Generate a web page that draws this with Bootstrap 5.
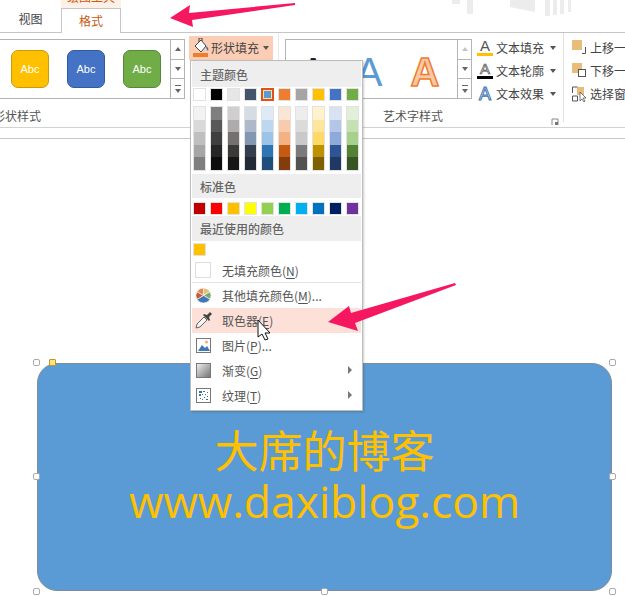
<!DOCTYPE html>
<html lang="zh-CN">
<head>
    <meta charset="UTF-8">
    <title>形状填充</title>
    <link rel="stylesheet" href="https://cdn.jsdelivr.net/npm/bootstrap@5.3.0/dist/css/bootstrap.min.css">
    <style>
        html, body { width: 625px; height: 596px; overflow: hidden; background: #fff; }
        body { position: relative; font-family: "Noto Sans CJK SC", sans-serif; font-size: 12px; line-height: 16px; color: #555; }
        u { text-underline-offset: 2px; }

        .tab-strip { height: 33px; border-bottom: 1px solid #c6c6c6; padding-left: 2px; }
        .tab-plain { width: 57px; margin-right: 2px; padding-top: 11px; text-align: center; color: #444; }
        .tab-col { width: 60px; }
        .tab-ctx { height: 8px; background: #fdf1e7; color: #d35a0d; overflow: hidden; line-height: 0; text-align: center; }
        .tab-ctx span { display: block; margin-top: -3px; }
        .tab-on { height: 25px; margin-bottom: -1px; background: #fff; border: 1px solid #c6c6c6; border-bottom: 0; color: #c65a11; text-align: center; line-height: 23px; }

        .ribbon { height: 95px; border-bottom: 1px solid #d2d2d2; overflow: hidden; }
        .ruler-strip { height: 11px; border-bottom: 1px solid #c6c6c6; }
        .rb-group { padding-top: 6px; }
        .rb-shape { width: 279px; border-right: 1px solid #e6e6e6; margin-bottom: 5px; }
        .rb-art { width: 284px; padding-left: 6px; }
        .rb-arrange { padding: 3px 0 0 8px; border-left: 1px solid #e0e0e0; margin-bottom: 5px; white-space: nowrap; }
        .rb-label { height: 26px; line-height: 34px; color: #555; white-space: nowrap; }
        .shape-label { margin-left: -7px; }
        .art-label { margin-left: 98px; }

        .gallery { height: 60px; border: 1px solid #b4b4b4; }
        .gal-shape { width: 186px; margin-left: -1px; border-left: 0; }
        .gal-art { width: 187px; }
        .gal-body { flex: 1; overflow: hidden; }
        .abc-row { gap: 18px; margin-left: 12px; }
        .spin { width: 14px; border-left: 1px solid #b4b4b4; }
        .spin div { flex: 1; border-bottom: 1px solid #b4b4b4; display: flex; align-items: center; justify-content: center; }
        .spin div:last-child { border-bottom: 0; }
        .tri-up { border: 3.5px solid transparent; border-top: 0; border-bottom: 4px solid #666; }
        .tri-dn { border: 3.5px solid transparent; border-bottom: 0; border-top: 4px solid #666; }
        .tri-off { border-bottom-color: #c4c4c4; }
        .tri-more { border-top: 1px solid #666; padding-top: 2px; line-height: 0; }

        .abc { width: 38px; height: 38px; border-radius: 7px; border: 1px solid; color: #fff; font: 11px/36px "Liberation Sans", sans-serif; text-align: center; }
        .abc-y { background: #ffc000; border-color: #c99a0c; }
        .abc-b { background: #4472c4; border-color: #325a9e; }
        .abc-g { background: #70ad47; border-color: #55883a; }

        .fill-btn { width: 84px; height: 24px; margin: -3px 0 0 4px; background: #fbcdb4; color: #444; padding-left: 4px; gap: 1px; }
        .caret-dn { border: 3px solid transparent; border-bottom: 0; border-top: 4px solid #555; }
        .fill-btn .caret-dn { margin-left: 3px; }
        .text-col { margin: -3px 0 -6px 5px; }
        .text-btn { height: 23px; color: #444; gap: 2px; white-space: nowrap; }
        .text-btn svg { flex: none; }
        .text-btn .caret-dn { margin-left: 4px; }
        .arrange-btn { height: 23px; color: #444; gap: 3px; }

        .stage { padding: 224px 0 0 37px; }
        .slide-shape { width: 575px; height: 228px; padding-bottom: 4px; background: #5b9bd5; border: 1px solid #7f8c99; border-radius: 20px; color: #ffc000; position: relative; }
        .slide-cn { font-size: 44px; line-height: 52px; }
        .slide-url { font-family: "Open Sans", sans-serif; font-size: 44.4px; line-height: 52px; }
        .grip { position: absolute; width: 7px; height: 7px; background: #fff; border: 1px solid #aaa; border-radius: 2px; }
        .grip-y { background: #ffe27a; border-color: #b69a2c; border-radius: 1px; }

        .fill-menu { position: absolute; left: 190px; top: 60px; width: 173px; height: 351px; background: #fff; border: 1px solid #bdbdbd; box-shadow: 1px 1px 2px rgba(0,0,0,.2); padding: 0 1px; }
        .menu-head { background: #eee; padding-left: 8px; color: #666; font-weight: 500; }
        .head-a { height: 26px; line-height: 27px; }
        .head-b { height: 24px; line-height: 25px; margin-top: 3px; }
        .head-c { height: 25px; line-height: 25px; margin-top: 1px; }
        .swatches { padding-left: 1px; gap: 4px; }
        .swatch { width: 13px; height: 13px; outline: 1px solid #e2e2e2; outline-offset: -1px; }
        .swatch-sel { border: 2px solid #e2511c; outline: 1px solid #fde39a; outline-offset: -3px; }
        .tint-col { width: 13px; height: 65px; padding: 1px; background: #e2e2e2; }
        .tint { height: 12.6px; }
        .menu-item { height: 25px; padding-left: 30px; position: relative; color: #555; }
        .menu-item svg.ic { position: absolute; left: 3px; top: 4px; }
        .menu-hot { background: #fde1d9; }
        .menu-sep { height: 1px; background: #e4e4e4; }
        .sub-arrow { position: absolute; right: 9px; top: 8px; border: 4px solid transparent; border-right: 0; border-left: 4px solid #777; }
        .no-fill { width: 16px; height: 16px; border: 1px solid #ddd; position: absolute; left: 3px; top: 3px; }

        .overlay { position: absolute; left: 0; top: 0; pointer-events: none; }
    </style>
</head>
<body>
    <div class="tab-strip d-flex">
        <div class="tab-plain">视图</div>
        <div class="tab-col">
            <div class="tab-ctx"><span>绘图工具</span></div>
            <div class="tab-on">格式</div>
        </div>
    </div>

    <div class="ribbon d-flex">
        <div class="rb-group rb-shape flex-shrink-0">
            <div class="d-flex">
                <div class="gallery gal-shape d-flex flex-shrink-0">
                    <div class="gal-body d-flex align-items-center">
                        <div class="abc-row d-flex">
                            <div class="abc abc-y">Abc</div>
                            <div class="abc abc-b">Abc</div>
                            <div class="abc abc-g">Abc</div>
                        </div>
                    </div>
                    <div class="spin d-flex flex-column">
                        <div><span class="tri-up"></span></div>
                        <div><span class="tri-dn"></span></div>
                        <div><span class="tri-more"><span class="tri-dn d-inline-block"></span></span></div>
                    </div>
                </div>
                <div class="fill-btn d-flex align-items-center flex-shrink-0">
                    <svg width="17" height="20" viewBox="0 0 17 20">
                        <path d="M2 8 8 2l5 6-5 6z" fill="#fff" stroke="#444"/>
                        <path d="M6 4V0h3v3" fill="none" stroke="#444"/>
                        <path d="M13 8c2 1 3 3 2 5-1-1-2-3-2-5z" fill="#3a6db0"/>
                        <rect x="0" y="15" width="15" height="4" fill="#ed7d31"/>
                    </svg>
                    <span>形状填充</span>
                    <span class="caret-dn"></span>
                </div>
            </div>
            <div class="rb-label shape-label">形状样式</div>
        </div>

        <div class="rb-group rb-art flex-shrink-0">
            <div class="d-flex">
                <div class="gallery gal-art d-flex flex-shrink-0">
                    <div class="gal-body">
                        <svg width="172" height="58" viewBox="0 0 172 58">
                            <text x="27" y="46" text-anchor="middle" font-size="40" font-family="Liberation Sans" fill="#222">A</text>
                            <text x="83" y="46" text-anchor="middle" font-size="40" font-family="Liberation Sans" fill="#5b9bd5">A</text>
                            <text x="139" y="46" text-anchor="middle" font-size="40" font-family="Liberation Sans" font-weight="bold" fill="#f9c9a5" stroke="#ed7d31" stroke-width="1.5">A</text>
                        </svg>
                    </div>
                    <div class="spin d-flex flex-column">
                        <div><span class="tri-up tri-off"></span></div>
                        <div><span class="tri-dn"></span></div>
                        <div><span class="tri-more"><span class="tri-dn d-inline-block"></span></span></div>
                    </div>
                </div>
                <div class="text-col d-flex flex-column">
                    <div class="text-btn d-flex align-items-center">
                        <svg width="17" height="20" viewBox="0 0 17 20"><text x="8" y="13" text-anchor="middle" font-size="15" font-family="Liberation Sans" fill="#555">A</text><rect y="15" width="16" height="3" fill="#ffc000"/></svg>
                        <span>文本填充</span><span class="caret-dn"></span>
                    </div>
                    <div class="text-btn d-flex align-items-center">
                        <svg width="17" height="20" viewBox="0 0 17 20"><text x="8" y="13" text-anchor="middle" font-size="15" font-family="Liberation Sans" fill="#fff" stroke="#555" stroke-width=".7">A</text><rect y="15" width="16" height="3" fill="#000"/></svg>
                        <span>文本轮廓</span><span class="caret-dn"></span>
                    </div>
                    <div class="text-btn d-flex align-items-center">
                        <svg width="17" height="20" viewBox="0 0 17 20"><text x="8" y="16" text-anchor="middle" font-size="18" font-family="Liberation Sans" fill="#fff" stroke="#3f78b5" stroke-width="1">A</text></svg>
                        <span>文本效果</span><span class="caret-dn"></span>
                    </div>
                </div>
            </div>
            <div class="rb-label art-label">艺术字样式</div>
        </div>

        <div class="rb-arrange flex-shrink-0">
            <div class="arrange-btn d-flex align-items-center">
                <svg width="15" height="15" viewBox="0 0 15 15"><rect x="0" y="0" width="10" height="10" fill="#e8bd7c"/><path d="M10 13.5h3.500V7" fill="none" stroke="#555"/></svg>
                <span>上移一层</span>
            </div>
            <div class="arrange-btn d-flex align-items-center">
                <svg width="15" height="15" viewBox="0 0 15 15"><rect x="0" y="0" width="10" height="10" fill="#e8bd7c"/><rect x="6.5" y="6.5" width="7" height="7" fill="#fff" stroke="#555"/></svg>
                <span>下移一层</span>
            </div>
            <div class="arrange-btn d-flex align-items-center">
                <svg width="15" height="16" viewBox="0 0 15 16"><rect x="5" y="1" width="7" height="8" fill="#e8bd7c"/><path d="M.5 1h5M.5 1v6M.5 10h5v5h-5z" fill="none" stroke="#555"/><path d="M8 6v9l2-2 2 3 1-1-2-3h3z" fill="#fff" stroke="#555" stroke-width=".8"/></svg>
                <span>选择窗格</span>
            </div>
        </div>
    </div>
    <div class="ruler-strip"></div>

    <div class="stage">
        <div class="slide-shape d-flex flex-column align-items-center justify-content-center">
            <div class="slide-cn">大席的博客</div>
            <div class="slide-url">www.daxiblog.com</div>
            <i class="grip" style="left:-5px;top:-5px"></i>
            <i class="grip grip-y" style="left:11px;top:-5px"></i>
            <i class="grip" style="right:-5px;top:-5px"></i>
            <i class="grip" style="left:-5px;top:109px"></i>
            <i class="grip" style="right:-5px;top:109px"></i>
            <i class="grip" style="left:-5px;bottom:-5px"></i>
            <i class="grip" style="left:283px;bottom:-5px"></i>
            <i class="grip" style="right:-5px;bottom:-5px"></i>
        </div>
    </div>

    <div class="fill-menu">
        <div class="menu-head head-a">主题颜色</div>
        <div class="swatches d-flex" id="themeRow" style="margin-top:1px"></div>
        <div class="swatches d-flex" id="tintRow" style="margin-top:5px"></div>
        <div class="menu-head head-b">标准色</div>
        <div class="swatches d-flex" id="stdRow" style="margin-top:4px"></div>
        <div class="menu-head head-c">最近使用的颜色</div>
        <div class="swatches d-flex" style="margin-top:2px"><div class="swatch" style="background:#ffc000"></div></div>
        <div class="menu-item d-flex align-items-center" style="margin-top:3px;height:23px"><span class="no-fill"></span>无填充颜色(<u>N</u>)</div>
        <div class="menu-sep"></div>
        <div class="menu-item d-flex align-items-center">
            <svg class="ic" width="17" height="17" viewBox="0 0 17 17">
                <g stroke="#fff" stroke-width=".6">
                    <path d="M8.5 8.5V1a7.5 7.5 0 0 1 6.5 3.700z" fill="#e3c07f"/>
                    <path d="M8.5 8.5 15 4.700a7.500 7.500 0 0 1 0 7.600z" fill="#7fa86a"/>
                    <path d="M8.5 8.5 15 12.300a7.500 7.500 0 0 1-13 0z" fill="#3f78b5"/>
                    <path d="M8.500 8.500 2 12.300a7.500 7.500 0 0 1 0-7.600z" fill="#c9583a"/>
                    <path d="M8.500 8.500 2 4.700A7.500 7.500 0 0 1 8.500 1z" fill="#e58a4e"/>
                </g>
            </svg>
            其他填充颜色(<u>M</u>)...
        </div>
        <div class="menu-item menu-hot d-flex align-items-center">
            <svg class="ic" width="17" height="17" viewBox="0 0 17 17">
                <path d="m1 16 1-4 7-7 3 3-7 7z" fill="#f4f4f4" stroke="#666"/>
                <path d="m8 3 6 6 1-1-1-3 3-3-2-2-3 3-3-1z" fill="#444"/>
            </svg>
            取色器(<u>E</u>)
        </div>
        <div class="menu-item d-flex align-items-center">
            <svg class="ic" width="17" height="17" viewBox="0 0 17 17">
                <rect x="1.5" y="1.500" width="14" height="14" fill="#fff" stroke="#777"/>
                <circle cx="11.500" cy="5" r="1.500" fill="#efb06c"/>
                <path d="m3 14 4-6 3 3 2-2 3 5z" fill="#3f78b5"/>
            </svg>
            图片(<u>P</u>)...
        </div>
        <div class="menu-item d-flex align-items-center">
            <svg class="ic" width="17" height="17" viewBox="0 0 17 17">
                <defs><linearGradient id="gradFill" x1="0" y1="0" x2="1" y2="1"><stop offset="0" stop-color="#f2f2f2"/><stop offset="1" stop-color="#707070"/></linearGradient></defs>
                <rect x="1.500" y="1.500" width="14" height="14" fill="url(#gradFill)" stroke="#777"/>
            </svg>
            渐变(<u>G</u>)<span class="sub-arrow"></span>
        </div>
        <div class="menu-item d-flex align-items-center">
            <svg class="ic" width="17" height="17" viewBox="0 0 17 17">
                <rect x="1.500" y="1.500" width="14" height="14" fill="#fff" stroke="#777"/>
                <path d="M4 4h3v2H4zM8 4h2v1H8zM4 7h2v2H4zM7 7h1v1H7zM10 7h1v1h-1zM12 5h1v1h-1zM5 11h1v1H5zM9 10h1v1H9zM12 9h1v1h-1zM7 12h1v1H7zM11 12h2v1h-2z" fill="#3f6fa8"/>
            </svg>
            纹理(<u>T</u>)<span class="sub-arrow"></span>
        </div>
    </div>

    <svg class="overlay" width="625" height="596" viewBox="0 0 625 596">
        <!-- faded artwork behind the title bar -->
        <path d="M452 0h8v4h-8zM467 0h6v14h-6zM510 0h25v12l-25-5zM545 0h5v16h-5zM553 0h4v15h-4zM560 0h4v14h-4zM568 0h3v12h-3z" fill="#ececec"/>
        <!-- launcher -->
        <path d="M552 125v-6h6v6" fill="none" stroke="#888"/>
        <path d="M555 122h3v3h-3z" fill="#777"/>
        <!-- pink arrows -->
        <path d="M170 18 190 5l-1 8 106-10 0 2-103 15 1 7z" fill="#f5175f"/>
        <path d="M328 322 349 306l2 7 104-30 1 2-101 38 3 8z" fill="#f5175f"/>
        <!-- mouse cursor -->
        <path d="M258 320v17l4-3 3 6 3-1-3-6h5z" fill="#fff" stroke="#111"/>
    </svg>

    <script>
        const theme = ['ffffff','000000','e7e6e6','44546a','5b9bd5','ed7d31','a5a5a5','ffc000','4472c4','70ad47'];
        const tints = [
            ['f2f2f2','d9d9d9','bfbfbf','a6a6a6','7f7f7f'],
            ['7f7f7f','595959','3f3f3f','262626','0d0d0d'],
            ['d0cece','aeabab','757070','3b3838','171616'],
            ['d6dce4','adb9ca','8497b0','333f4f','222a35'],
            ['deebf6','bdd7ee','9dc3e6','2e75b5','1e4e79'],
            ['fbe5d5','f7cbac','f4b183','c55a11','833c0b'],
            ['ededed','dbdbdb','c9c9c9','7b7b7b','525252'],
            ['fff2cc','fee599','ffd965','bf9000','7f6000'],
            ['d9e2f3','b4c6e7','8eaadb','2f5496','1f3864'],
            ['e2efd9','c5e0b3','a8d08d','538135','375623']
        ];
        const standard = ['c00000','ff0000','ffc000','ffff00','92d050','00b050','00b0f0','0070c0','002060','7030a0'];

        function swatchHtml(color, index) {
            const selected = index === 4 && color === '5b9bd5' ? ' swatch-sel' : '';
            return `<div class="swatch${selected}" style="background:#${color}"></div>`;
        }
        document.getElementById('themeRow').innerHTML = theme.map(swatchHtml).join('');
        document.getElementById('stdRow').innerHTML = standard.map(swatchHtml).join('');
        document.getElementById('tintRow').innerHTML = tints.map(col =>
            `<div class="tint-col">${col.map(c => `<div class="tint" style="background:#${c}"></div>`).join('')}</div>`
        ).join('');
    </script>
    <script src="https://cdn.jsdelivr.net/npm/bootstrap@5.3.0/dist/js/bootstrap.bundle.min.js"></script>
</body>
</html>
